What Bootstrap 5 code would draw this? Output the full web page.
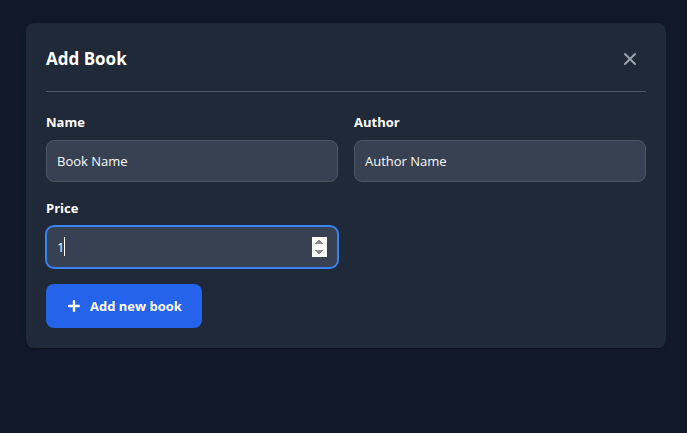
<!DOCTYPE html>
<html lang="en">
<head>
<meta charset="utf-8">
<meta name="viewport" content="width=device-width, initial-scale=1">
<title>Add Book</title>
<link href="https://cdn.jsdelivr.net/npm/bootstrap@5.3.0/dist/css/bootstrap.min.css" rel="stylesheet">
<style>
  body { background: #111827; color: #fff; font: 14px/20px "Open Sans", "Noto Sans", sans-serif; }
  .page { padding: 23px 21px 23px 26px; }
  .dialog-panel { background: #1f2937; border-radius: 8px; padding: 20px; box-shadow: 0 1px 3px rgba(0, 0, 0, .2); }
  .dialog-head { border-bottom: 1px solid #4b5563; padding-bottom: 16px; margin-bottom: 20px; }
  .dialog-title { font-size: 17px; line-height: 28px; font-weight: 700; }
  .close-btn { width: 32px; height: 32px; color: #9ca3af; border-radius: 8px; }
  .close-btn:hover { background: #4b5563; color: #fff; }
  .field-label { font-size: 13px; line-height: 20px; font-weight: 700; margin-bottom: 8px; }
  .field-input, .field-input:focus { background: #374151; color: #fff; border: 1px solid #4b5563; border-radius: 8px; padding: 10px; font-size: 13px; line-height: 20px; box-shadow: none; }
  .field-input::placeholder { color: #f9fafb; opacity: 1; }
  .field-input:focus, .field-input.active-field { border-color: #3b82f6; box-shadow: 0 0 0 1px #3b82f6; }
  .field-input.active-field { caret-color: transparent; }
  .field-input::-webkit-inner-spin-button { opacity: 1; }
  .text-caret { left: 18px; top: 11px; width: 1px; height: 19px; background: #fff; pointer-events: none; }
  .submit-btn, .submit-btn:hover { background: #2563eb; color: #fff; border-radius: 8px; padding: 10px 20px 10px 16px; font-size: 13px; line-height: 20px; font-weight: 700; }
</style>
</head>
<body>
<main class="page">
  <section class="dialog-panel">
    <header class="dialog-head d-flex justify-content-between align-items-center">
      <h1 class="dialog-title mb-0">Add Book</h1>
      <button type="button" class="close-btn btn border-0 p-0 d-flex align-items-center justify-content-center" aria-label="Close">
        <svg width="20" height="20" viewBox="0 0 20 20" fill="none" stroke="currentColor" stroke-width="2" stroke-linecap="round" aria-hidden="true"><path d="M5 5l10 10M15 5L5 15"/></svg>
      </button>
    </header>
    <form>
      <div class="row row-cols-2 gx-3 gy-3 mb-3">
        <div class="col">
          <label for="name" class="field-label d-block">Name</label>
          <input id="name" type="text" class="form-control field-input" placeholder="Book Name">
        </div>
        <div class="col">
          <label for="author" class="field-label d-block">Author</label>
          <input id="author" type="text" class="form-control field-input" placeholder="Author Name">
        </div>
        <div class="col">
          <label for="price" class="field-label d-block">Price</label>
          <div class="position-relative">
            <input id="price" type="number" class="form-control field-input active-field" value="1" autofocus>
            <span class="text-caret position-absolute" aria-hidden="true"></span>
          </div>
        </div>
      </div>
      <button type="button" class="submit-btn btn border-0 d-inline-flex align-items-center">
        <svg class="me-1" width="24" height="24" viewBox="0 0 20 20" fill="currentColor" aria-hidden="true"><path fill-rule="evenodd" d="M10 5a1 1 0 011 1v3h3a1 1 0 110 2h-3v3a1 1 0 11-2 0v-3H6a1 1 0 110-2h3V6a1 1 0 011-1z" clip-rule="evenodd"/></svg>
        Add new book
      </button>
    </form>
  </section>
</main>
<script src="https://cdn.jsdelivr.net/npm/bootstrap@5.3.0/dist/js/bootstrap.bundle.min.js"></script>
</body>
</html>
